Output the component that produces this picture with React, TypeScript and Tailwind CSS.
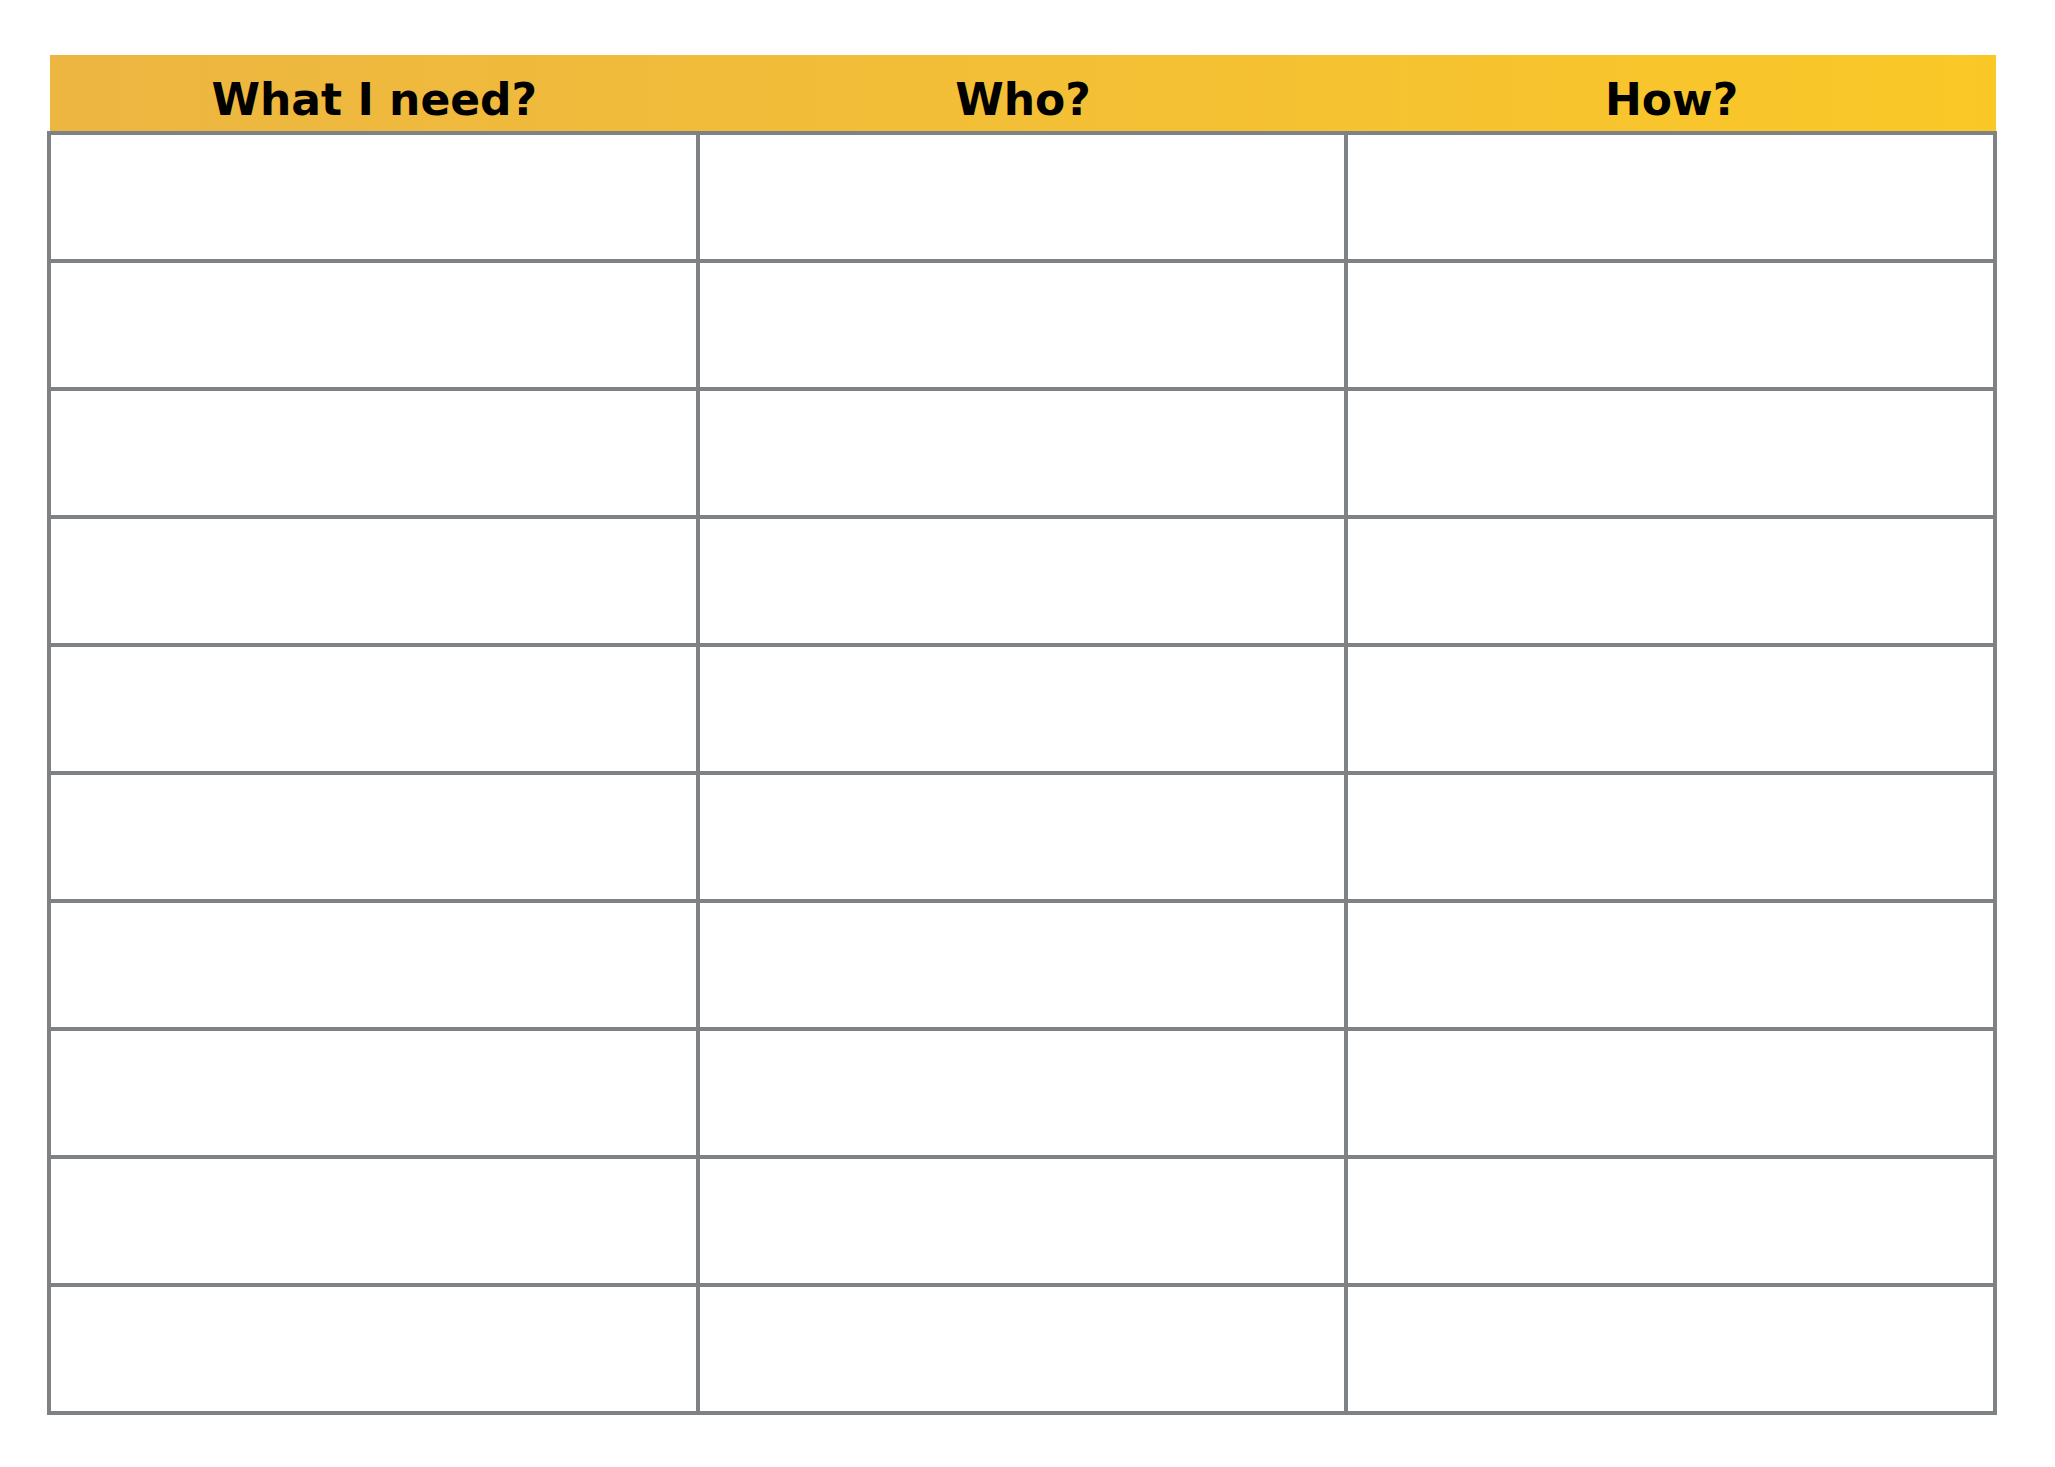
const columns = ["What I need?", "Who?", "How?"];
const rows = Array.from({ length: 10 }, (_, i) => i);

export default function App() {
  return (
    <div className="w-[2055px] h-[1467px] bg-white pt-[55px] pl-[47px]">
      <div className="w-[1950px]">
        <div className="ml-[3px] mr-[1px] h-[76px] bg-gradient-to-r from-[#ecb641] to-[#fac826] grid grid-cols-3 pt-[23px]">
          {columns.map((c) => (
            <div
              key={c}
              className="text-center text-[44px] leading-[44px] font-bold text-black font-['DejaVu_Sans',sans-serif]"
            >
              {c}
            </div>
          ))}
        </div>
        <div className="grid grid-cols-3 gap-[4px] p-[4px] bg-[#7e8284]">
          {rows.map((r) =>
            columns.map((c) => <div key={`${r}-${c}`} className="h-[124px] bg-white" />)
          )}
        </div>
      </div>
    </div>
  );
}
